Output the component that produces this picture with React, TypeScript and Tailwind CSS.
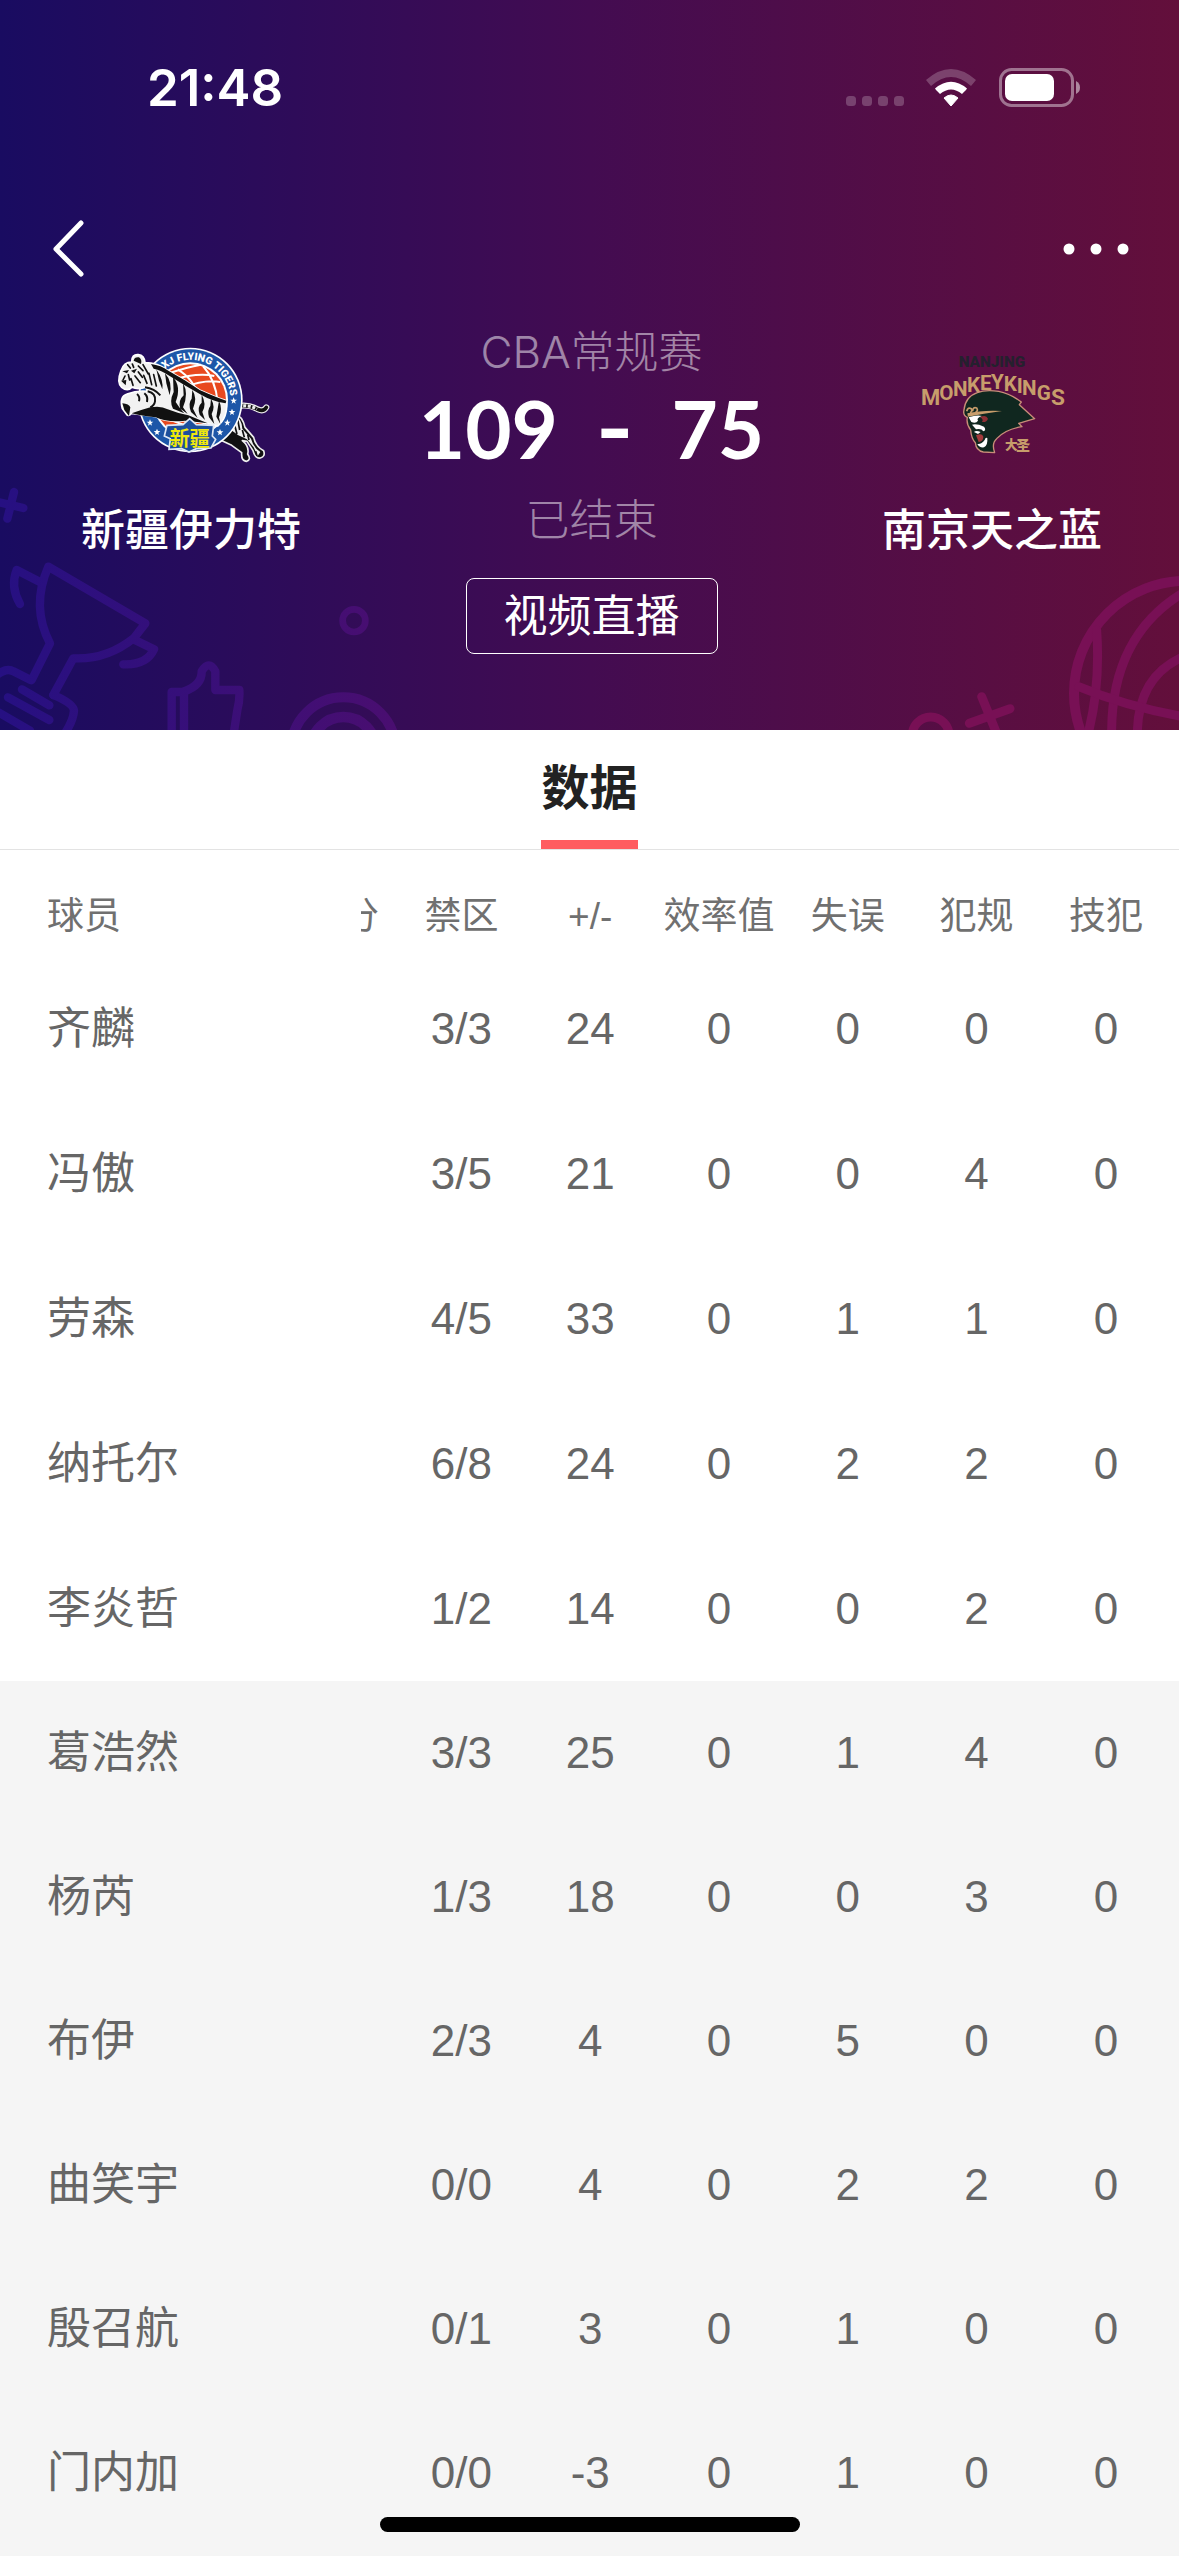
import type { ReactNode } from 'react';

interface Player {
  name: string;
  paint: string;
  plusMinus: number;
  efficiency: number;
  turnovers: number;
  fouls: number;
  technicals: number;
  starter: boolean;
}

const players: Player[] = [
  { name: '齐麟', paint: '3/3', plusMinus: 24, efficiency: 0, turnovers: 0, fouls: 0, technicals: 0, starter: true },
  { name: '冯傲', paint: '3/5', plusMinus: 21, efficiency: 0, turnovers: 0, fouls: 4, technicals: 0, starter: true },
  { name: '劳森', paint: '4/5', plusMinus: 33, efficiency: 0, turnovers: 1, fouls: 1, technicals: 0, starter: true },
  { name: '纳托尔', paint: '6/8', plusMinus: 24, efficiency: 0, turnovers: 2, fouls: 2, technicals: 0, starter: true },
  { name: '李炎哲', paint: '1/2', plusMinus: 14, efficiency: 0, turnovers: 0, fouls: 2, technicals: 0, starter: true },
  { name: '葛浩然', paint: '3/3', plusMinus: 25, efficiency: 0, turnovers: 1, fouls: 4, technicals: 0, starter: false },
  { name: '杨芮', paint: '1/3', plusMinus: 18, efficiency: 0, turnovers: 0, fouls: 3, technicals: 0, starter: false },
  { name: '布伊', paint: '2/3', plusMinus: 4, efficiency: 0, turnovers: 5, fouls: 0, technicals: 0, starter: false },
  { name: '曲笑宇', paint: '0/0', plusMinus: 4, efficiency: 0, turnovers: 2, fouls: 2, technicals: 0, starter: false },
  { name: '殷召航', paint: '0/1', plusMinus: 3, efficiency: 0, turnovers: 1, fouls: 0, technicals: 0, starter: false },
  { name: '门内加', paint: '0/0', plusMinus: -3, efficiency: 0, turnovers: 1, fouls: 0, technicals: 0, starter: false },
];

const columns = ['禁区', '+/-', '效率值', '失误', '犯规', '技犯'];

function StatusBar() {
  return (
    <div className="flex items-center justify-between pt-14 pl-[147px] pr-[98px] text-white">
      <span className="font-['Inter',sans-serif] text-[51px] leading-16 font-semibold">21:48</span>
      <svg className="h-10 w-[236px]" viewBox="0 0 236 40" fill="none" aria-hidden="true">
        {[0, 16, 32, 48].map((x) => (
          <rect key={x} x={x + 1} y="28" width="10" height="10" rx="3.5" fill="#fff" fillOpacity="0.22" />
        ))}
        {/* wifi */}
        <path d="M81 12 Q106 -10 131 12 L126 18 Q106 0 86 18 Z" fill="#fff" fillOpacity="0.22" />
        <path d="M90 20.500 Q106 7 122 20.500 Q122 21 117 26 Q106 17 95 26 Q90 21 90 20.500 Z" fill="#fff" />
        <path d="M99 30 Q106 24 113 30 L106 38 Z" fill="#fff" stroke="#fff" strokeLinejoin="round" />
        {/* battery */}
        <rect x="155.500" y="1.500" width="72" height="36" rx="11" stroke="#fff" strokeOpacity="0.42" strokeWidth="3" />
        <rect x="160" y="6" width="49" height="27" rx="7" fill="#fff" />
        <path d="M231 13 Q235 15 235 19.500 Q235 24 231 26 Z" fill="#fff" fillOpacity="0.5" />
      </svg>
    </div>
  );
}

function NavBar() {
  return (
    <nav className="mt-20 flex h-24 items-center justify-between pr-12 pl-11 text-white">
      <button type="button" aria-label="返回" className="p-2">
        <svg className="h-15 w-8" viewBox="0 0 32 60" fill="none">
          <path d="M29 5 L4 31 L29 56" stroke="currentColor" strokeWidth="5" strokeLinecap="round" strokeLinejoin="round" />
        </svg>
      </button>
      <button type="button" aria-label="更多" className="py-4">
        <svg className="h-4 w-[68px]" viewBox="0 0 68 16" fill="currentColor">
          <circle cx="6" cy="9" r="5.500" />
          <circle cx="33" cy="9" r="5.500" />
          <circle cx="60" cy="9" r="5.500" />
        </svg>
      </button>
    </nav>
  );
}

function Star({ x, y }: { x: number; y: number }) {
  return (
    <path
      transform={`translate(${x} ${y})`}
      d="M0 -10 L3 -3 L10 -3 L4 2 L6 9 L0 5 L-6 9 L-4 2 L-10 -3 L-3 -3 Z"
      fill="#fff"
    />
  );
}

function TigersLogo() {
  return (
    <svg className="h-[150px] w-[180px]" viewBox="0 0 540 450" role="img" aria-label="新疆伊力特">
      {/* tail and hind legs sit behind the badge */}
      <path d="M410 228 Q445 222 470 238 Q488 246 496 232" fill="none" stroke="#eee" strokeWidth="18" strokeLinecap="round" />
      <path d="M412 228 Q445 224 470 238 Q488 246 496 232" fill="none" stroke="#111" strokeWidth="11" strokeLinecap="round" />
      <path d="M412 228 Q445 224 468 237" fill="none" stroke="#eee" strokeWidth="9" strokeDasharray="9 5" />
      <path d="M398 248 Q425 258 432 292 L458 322 Q464 350 488 362 Q494 380 478 384 Q462 386 456 362 L438 334 L424 332 Q446 350 440 372 Q452 390 436 394 Q420 392 422 368 L392 346 L350 326 Z" fill="#111" stroke="#eee" strokeWidth="5" strokeLinejoin="round" />
      <path d="M402 256 Q422 266 424 296 L450 326 Q458 354 478 366 L470 378 L458 352 L438 328 L412 316 L390 300 Z" fill="#f0f0f0" />
      <path d="M410 268 L416 300 M400 282 L408 312 M424 300 L430 322 M440 314 L444 330 M464 364 L468 378" stroke="#111" strokeWidth="5" />
      {/* badge */}
      <circle cx="268" cy="210" r="157" fill="#fff" />
      <circle cx="268" cy="210" r="152" fill="#1d56a8" />
      <circle cx="268" cy="210" r="113" fill="#fff" />
      <circle cx="268" cy="210" r="107" fill="#e8491f" />
      <path d="M188 135 Q260 110 300 104 M212 150 Q292 126 340 138 M250 172 Q310 148 358 156 M306 108 Q344 150 350 216 M230 118 Q282 150 290 200 M180 260 L250 285" fill="none" stroke="#fff" strokeWidth="6" />
      <path id="tigers-arc" d="M191 117 A121 121 0 0 1 388 222" fill="none" />
      <text fill="#fff" className="font-['Roboto',sans-serif] text-[31px] font-black">
        <textPath href="#tigers-arc">XJ FLYING TIGERS</textPath>
      </text>
      <Star x={398} y={212} />
      <Star x={393} y={246} />
      <Star x={379} y={278} />
      <Star x={357} y={307} />
      <Star x={147} y={278} />
      <Star x={168} y={306} />
      {/* leaping body */}
      <path d="M60 122 Q68 96 92 96 Q92 72 112 74 Q130 76 132 98 Q170 98 202 122 Q254 150 296 180 Q350 204 376 212 Q382 262 350 288 Q300 276 252 272 Q200 278 164 260 Q120 254 92 250 Q82 262 76 252 L64 236 Q54 200 78 192 Q110 180 140 184 L134 172 Q112 180 92 172 Q80 186 62 172 Q46 158 60 122 Z" fill="#f2f2f2" stroke="#fff" strokeWidth="5" />
      <path d="M150 102 Q180 106 202 122 Q254 150 296 180 Q350 204 376 212 L374 220 Q330 212 300 194 Q250 166 206 138 Q180 120 158 116 Z" fill="#111" />
      <path d="M92 250 Q120 240 148 232 Q180 226 200 238 Q230 250 262 256 L320 280 Q290 276 252 272 Q200 278 164 262 Q120 258 92 250 Z M64 220 Q84 222 88 232 L84 258 L70 240 Z" fill="#111" />
      <path d="M166 118 Q188 150 184 178 L174 152 Z M192 130 Q216 156 206 196 L196 160 Z M216 142 Q242 170 224 216 Q240 240 250 250 L216 236 Q204 214 218 186 Z M246 160 Q264 190 246 232 L260 252 L238 236 Q230 212 248 196 Z M274 180 Q290 204 276 236 L290 264 L270 246 Q260 220 272 206 Z M302 194 Q318 222 304 246 L312 270 L296 254 Q288 230 302 218 Z M330 206 Q344 230 332 252 L340 282 L324 262 Q318 240 328 228 Z M354 212 Q366 238 354 262 L358 282 L346 260 Z" fill="#111" />
      <path d="M140 184 Q166 190 162 214 Q160 226 148 232 M132 172 Q160 176 178 196 M108 192 Q118 200 114 214 M130 190 Q142 200 138 216" fill="none" stroke="#111" strokeWidth="6" />
      <path d="M98 92 Q100 80 114 82 Q124 88 120 102 Z M64 124 L84 120 L78 130 Z M90 122 L108 116 L100 130 Z M60 152 L76 150 L74 166 Z" fill="#111" />
      <path d="M80 104 L88 114 M94 102 L98 112 M112 108 L126 122 M126 104 L142 132 M112 126 L124 142 M102 138 L118 158 M128 136 L138 160 M144 130 L152 164 M90 146 L96 166 M72 138 L66 150 M82 134 L86 150 M158 134 L166 168" stroke="#111" strokeWidth="5" strokeLinecap="round" />
      {/* name plate */}
      <path d="M198 286 L246 284 L266 266 L286 284 L338 286 L334 318 L344 328 L330 354 L286 356 L264 366 L242 356 L204 358 L208 326 L190 318 Z" fill="#1d4f9c" stroke="#dfe8f5" strokeWidth="5" />
      <text x="206" y="348" fill="#f0e80c" className="font-['Noto_Sans_CJK_SC',sans-serif] text-[60px] font-bold">新疆</text>
    </svg>
  );
}

// x, baseline and size of each letter along the arched wordmark
const monkeyKings: [string, number, number, number][] = [
  ['M', 57, 226, 66],
  ['O', 112, 210, 62],
  ['N', 153, 197, 62],
  ['K', 195, 187, 62],
  ['E', 234, 180, 62],
  ['Y', 267, 178, 62],
  ['K', 305, 182, 62],
  ['I', 344, 188, 62],
  ['N', 360, 196, 62],
  ['G', 404, 210, 62],
  ['S', 447, 226, 68],
];

function MonkeyKingsLogo() {
  return (
    <svg className="h-[150px] w-[180px]" viewBox="0 0 540 450" role="img" aria-label="南京天之蓝">
      <text x="170" y="110" fill="#25202e" className="font-['Roboto',sans-serif] text-[46px] font-black">NANJING</text>
      <g fill="#c79d6b" className="font-['Roboto',sans-serif] font-bold">
        {monkeyKings.map(([letter, x, y, size], i) => (
          <text key={i} x={x} y={y} fontSize={size}>{letter}</text>
        ))}
      </g>
      <path d="M186 240 Q190 200 226 188 Q250 178 290 184 Q324 190 358 216 L352 224 L398 266 L350 280 L360 290 Q310 298 284 326 Q268 340 278 368 L244 366 Q222 362 220 338 Q208 326 206 300 Q192 282 196 262 Q182 256 186 240 Z" fill="#10271f" stroke="#c98d78" strokeWidth="4" strokeLinejoin="round" />
      <path d="M196 250 Q240 240 300 243 Q250 250 198 260 Z" fill="#c79d6b" />
      <path d="M194 244 Q198 230 208 236 Q212 246 204 248 M212 244 Q212 230 224 234 Q230 242 220 248" fill="none" stroke="#c79d6b" strokeWidth="5" />
      <path d="M200 262 Q224 254 240 258 Q222 264 228 272 Q222 282 208 276 Z M210 284 Q224 280 246 290 Q254 300 244 304 Q238 294 222 298 Z M216 306 Q222 300 236 306 L228 312 Z M226 342 Q238 344 248 330 Q250 322 256 324 Q258 346 246 352 Q232 354 226 342 Z" fill="#fff" />
      <path d="M234 262 Q252 252 258 266 Q254 278 240 276 Q246 268 234 262 Z" fill="#8d2f34" />
      <path d="M222 316 Q240 308 244 320 Q244 334 230 336 Z" fill="#a33a3c" />
      <text x="309" y="357" fill="#c79d6b" className="font-['Noto_Sans_CJK_SC',sans-serif] text-[38px] font-black">大</text>
      <text x="342" y="359" fill="#c79d6b" className="font-['Noto_Sans_CJK_SC',sans-serif] text-[42px] font-black">圣</text>
    </svg>
  );
}

// faint trophy, thumb and ball doodles along the bottom of the header
function HeaderDoodles() {
  return (
    <>
      <svg className="absolute bottom-0 left-0 h-[270px] w-[420px]" viewBox="0 0 1260 810" fill="none" aria-hidden="true">
        <defs>
          <linearGradient id="doodle-left" gradientUnits="userSpaceOnUse" x1="0" y1="0" x2="1200" y2="0">
            <stop offset="0" stopColor="#261082" />
            <stop offset="1" stopColor="#4a0e70" />
          </linearGradient>
        </defs>
        <g stroke="url(#doodle-left)" strokeWidth="25" strokeLinecap="round" strokeLinejoin="round">
          <path d="M42 96 L22 176 M-10 125 L70 144" />
          <path d="M95 660 L150 550 Q92 440 145 320 L436 490 L402 534 Q320 600 220 595 L160 705" />
          <path d="M120 366 L50 330 Q30 380 60 432" />
          <path d="M400 538 L462 568 Q440 616 370 613" />
          <path d="M-10 645 Q20 622 40 634 L92 660 M160 705 Q220 730 222 752 Q220 780 198 815" />
          <path d="M66 688 L148 736 M24 712 L148 780 M-6 756 L90 812" />
          <path d="M515 815 V696 H552 V815" />
          <path d="M552 694 Q606 676 605 634 Q627 598 646 634 L646 690 L718 690 Q720 720 712 750 L702 815" />
          <circle cx="1062" cy="482" r="34" strokeWidth="20" />
          <circle cx="1030" cy="868" r="156" strokeWidth="30" />
          <circle cx="1030" cy="868" r="97" strokeWidth="32" />
        </g>
      </svg>
      <svg className="absolute right-0 bottom-0 h-[270px] w-[379px]" viewBox="0 0 1137 810" fill="none" aria-hidden="true">
        <g stroke="#781055" strokeWidth="27" strokeLinecap="round" strokeLinejoin="round">
          <circle cx="392" cy="826" r="55" />
          <path d="M545 710 L592 825 M508 790 L630 746" />
          <circle cx="1160" cy="700" r="338" strokeWidth="30" />
          <path d="M1150 398 Q930 530 935 830" />
          <path d="M1150 590 Q1010 650 1012 830" />
          <path d="M890 510 Q902 680 862 830" />
          <path d="M836 680 Q980 740 1150 770" />
        </g>
      </svg>
    </>
  );
}

function Team({ name, children }: { name: string; children: ReactNode }) {
  return (
    <div className="flex flex-col items-center pt-[34px]">
      {children}
      <h2 className="mt-4.5 text-[44px] leading-16 font-medium">{name}</h2>
    </div>
  );
}

export default function App() {
  return (
    <div className="min-h-screen bg-[#f5f5f5] font-['Liberation_Sans','Noto_Sans_CJK_SC',sans-serif]">
      <header className="relative overflow-hidden bg-linear-to-r/srgb from-[#190c61] via-[#430c51] to-[#630f3b] pb-19">
        <HeaderDoodles />
        <div className="relative">
          <StatusBar />
          <NavBar />
          <section className="grid grid-cols-[374px_1fr_374px] pl-1 font-['Inter','Noto_Sans_CJK_SC',sans-serif] text-white">
            <Team name="新疆伊力特">
              <TigersLogo />
            </Team>
            <div className="flex flex-col items-center pt-7">
              <p className="text-[44px] leading-14 font-light text-white/50">CBA常规赛</p>
              <p className="flex gap-[38px] font-['Lato',sans-serif] text-[80px] leading-24 font-bold">
                <span>109</span>
                <span className="font-['Inter',sans-serif]">-</span>
                <span>75</span>
              </p>
              <p className="mt-4 text-[44px] leading-14 font-light text-white/50">已结束</p>
              <button type="button" className="mt-7.5 h-19 rounded-lg border border-white px-[37px] text-[44px] leading-16">
                视频直播
              </button>
            </div>
            <Team name="南京天之蓝">
              <MonkeyKingsLogo />
            </Team>
          </section>
        </div>
      </header>

      <div role="tablist" className="flex h-30 justify-center border-b border-[#e3e3e3] bg-white">
        <button type="button" role="tab" aria-selected="true" className="border-b-9 border-[#ff5c60] pt-2 text-[48px] font-bold text-[#222]">
          数据
        </button>
      </div>

      <table className="w-full table-fixed bg-white text-center text-[44px] text-[#666]">
        <colgroup>
          <col className="w-[361px]" />
          <col className="w-9" />
          {columns.map((label) => (
            <col key={label} className="last:w-[138px]" />
          ))}
        </colgroup>
        <thead className="text-[37px] text-[#707070]">
          <tr className="h-[106px]">
            <th scope="col" className="pt-7 pl-[47px] text-left font-normal">球员</th>
            {/* column scrolled under the fixed player names */}
            <th scope="col" className="pt-7 font-normal">
              <div className="flex justify-end overflow-hidden pr-[18px]">
                <span className="whitespace-nowrap">三分</span>
              </div>
            </th>
            {columns.map((label) => (
              <th key={label} scope="col" className="pt-7 font-normal whitespace-nowrap last:pr-2">{label}</th>
            ))}
          </tr>
        </thead>
        <tbody>
          {players.map((player) => (
            <tr key={player.name} className={player.starter ? 'h-[145px]' : 'h-36 bg-[#f5f5f5]'}>
              <th scope="row" className="pl-[47px] text-left font-normal">{player.name}</th>
              <td />
              <td>{player.paint}</td>
              <td>{player.plusMinus}</td>
              <td>{player.efficiency}</td>
              <td>{player.turnovers}</td>
              <td>{player.fouls}</td>
              <td className="pr-2">{player.technicals}</td>
            </tr>
          ))}
        </tbody>
      </table>

      <div className="fixed bottom-6 left-1/2 h-[15px] w-[420px] -translate-x-1/2 rounded-full bg-black" />
    </div>
  );
}
